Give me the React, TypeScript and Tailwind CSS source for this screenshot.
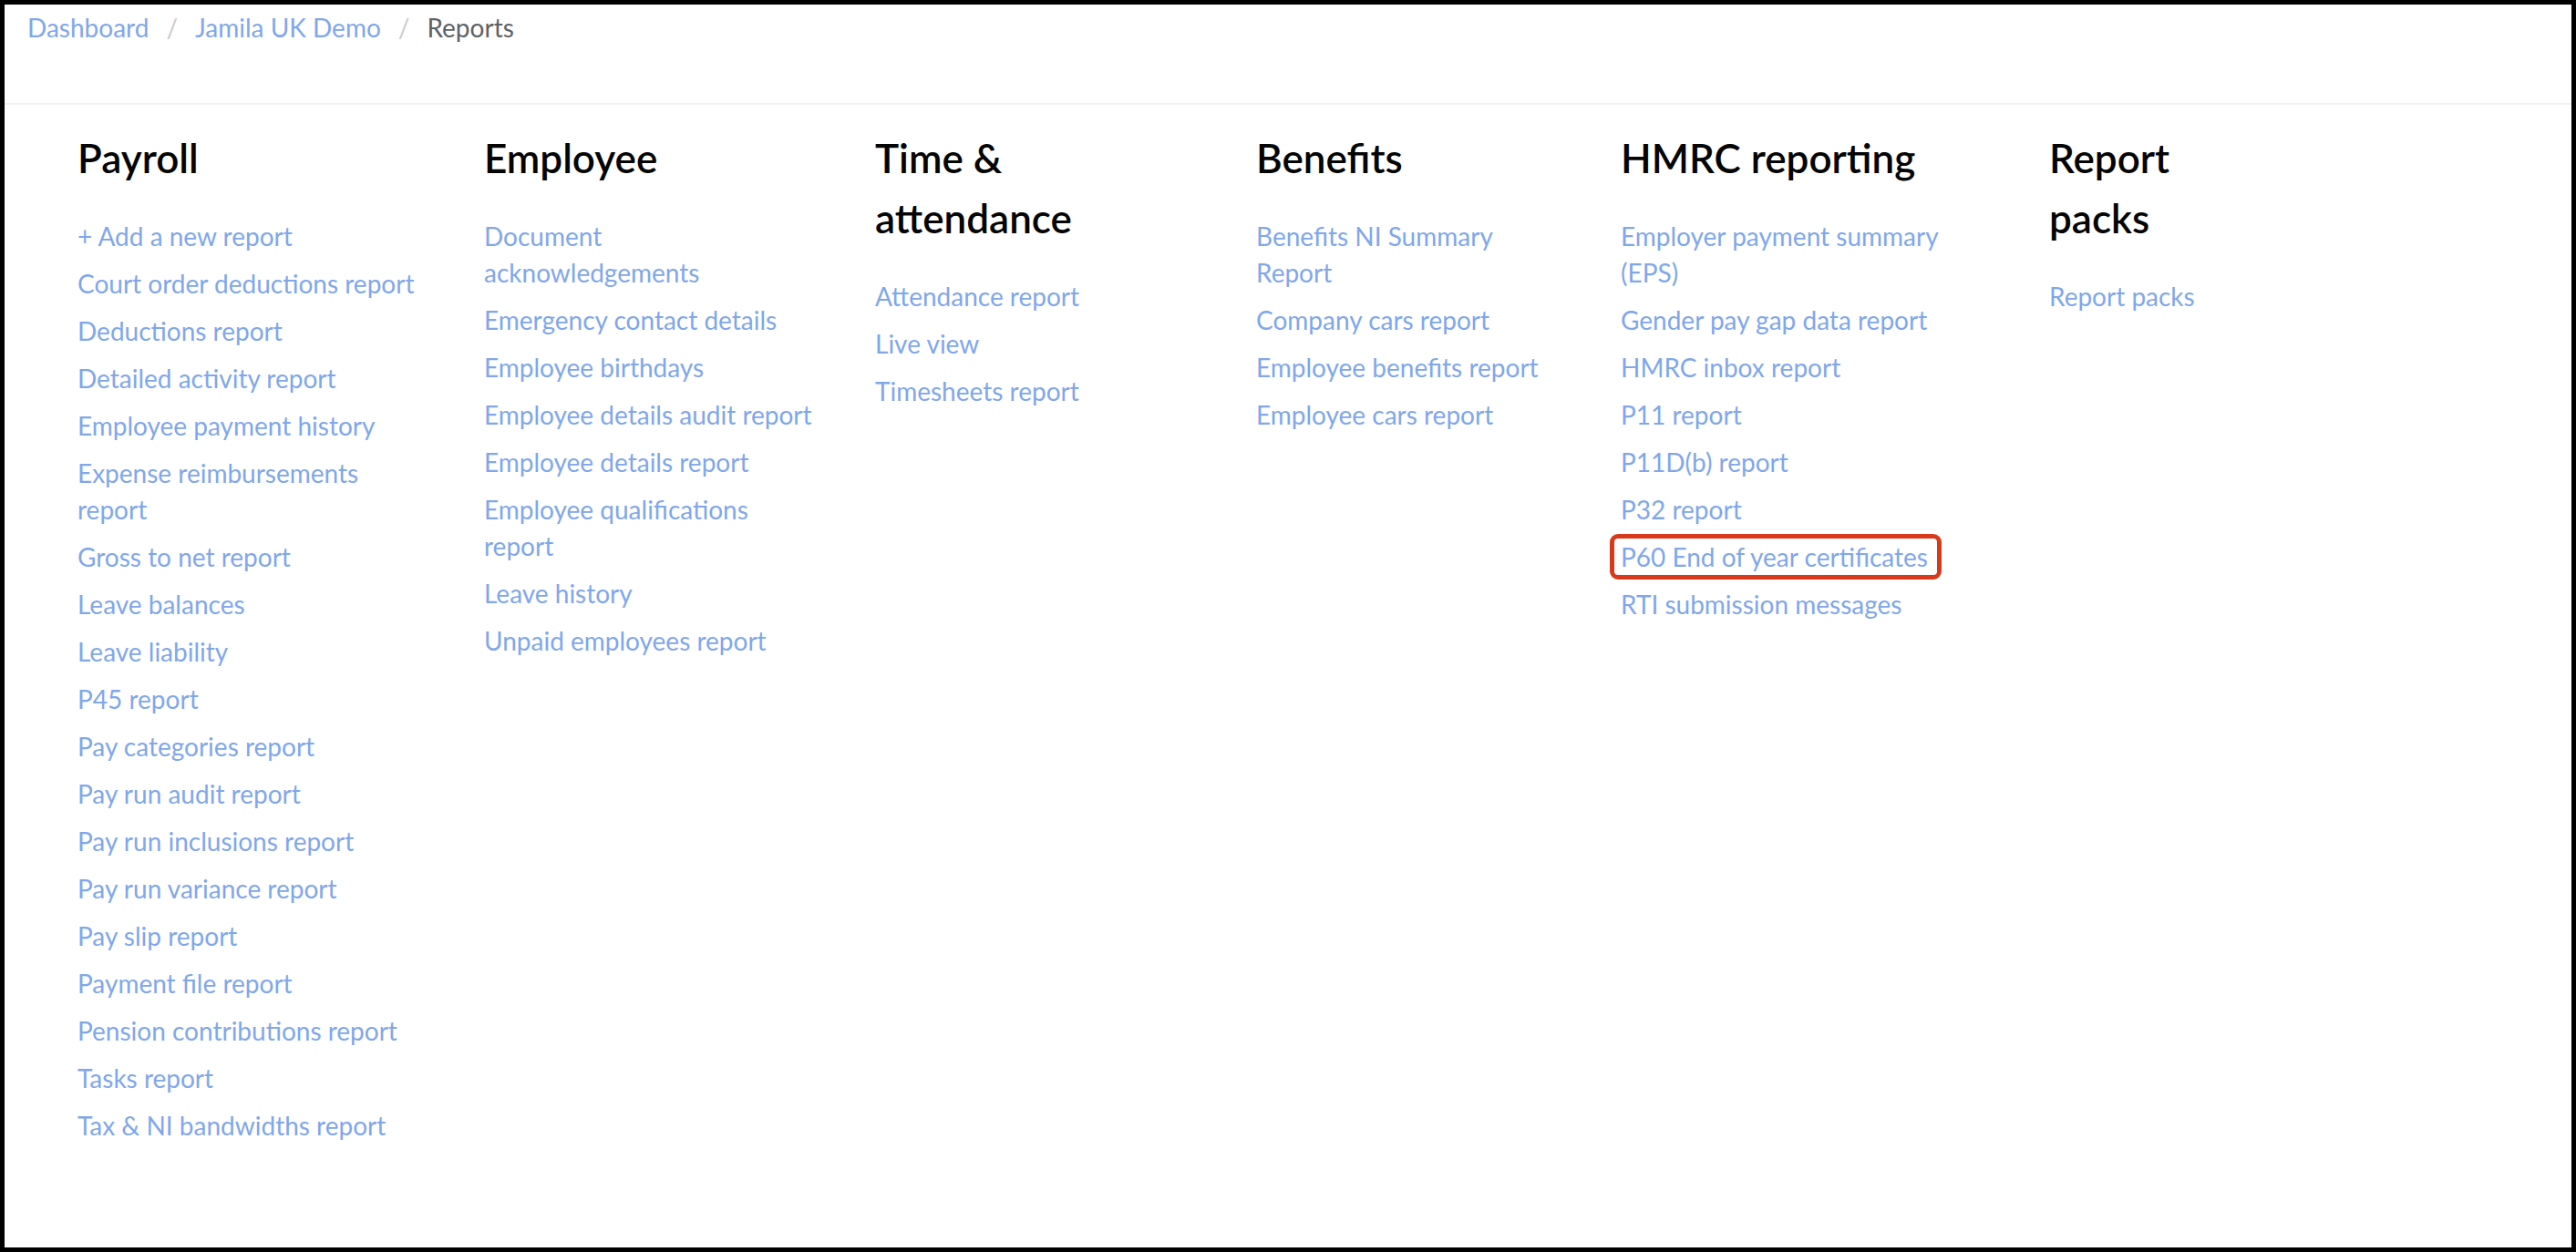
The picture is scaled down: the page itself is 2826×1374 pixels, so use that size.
import type { ReactNode } from "react";

type ReportGroup = {
  title: string;
  // track width of the column and the width its text wraps at
  track: string;
  wrap: string;
  items: string[];
};

const groups: ReportGroup[] = [
  {
    title: "Payroll",
    track: "w-[446px]",
    wrap: "max-w-[380px]",
    items: [
      "+ Add a new report",
      "Court order deductions report",
      "Deductions report",
      "Detailed activity report",
      "Employee payment history",
      "Expense reimbursements report",
      "Gross to net report",
      "Leave balances",
      "Leave liability",
      "P45 report",
      "Pay categories report",
      "Pay run audit report",
      "Pay run inclusions report",
      "Pay run variance report",
      "Pay slip report",
      "Payment file report",
      "Pension contributions report",
      "Tasks report",
      "Tax & NI bandwidths report",
    ],
  },
  {
    title: "Employee",
    track: "w-[429px]",
    wrap: "max-w-[362px]",
    items: [
      "Document acknowledgements",
      "Emergency contact details",
      "Employee birthdays",
      "Employee details audit report",
      "Employee details report",
      "Employee qualifications report",
      "Leave history",
      "Unpaid employees report",
    ],
  },
  {
    title: "Time & attendance",
    track: "w-[418px]",
    wrap: "max-w-[290px]",
    items: ["Attendance report", "Live view", "Timesheets report"],
  },
  {
    title: "Benefits",
    track: "w-[400px]",
    wrap: "max-w-[325px]",
    items: [
      "Benefits NI Summary Report",
      "Company cars report",
      "Employee benefits report",
      "Employee cars report",
    ],
  },
  {
    title: "HMRC reporting",
    track: "w-[470px]",
    wrap: "max-w-[385px]",
    items: [
      "Employer payment summary (EPS)",
      "Gender pay gap data report",
      "HMRC inbox report",
      "P11 report",
      "P11D(b) report",
      "P32 report",
      "P60 End of year certificates",
      "RTI submission messages",
    ],
  },
  {
    title: "Report packs",
    track: "w-[200px]",
    wrap: "max-w-[200px]",
    items: ["Report packs"],
  },
];

const HIGHLIGHTED = "P60 End of year certificates";

function Crumb({ children, current }: { children: ReactNode; current?: boolean }) {
  return (
    <span className={current ? "text-[#5c6267]" : "text-[#80a7ea]"}>{children}</span>
  );
}

function Slash() {
  return <span className="mx-[19px] text-[#cbcbcb]">/</span>;
}

function ReportLink({ label }: { label: string }) {
  if (label !== HIGHLIGHTED) {
    return <a className="cursor-pointer text-[#80a7ea]">{label}</a>;
  }
  return (
    <span className="relative inline-block">
      <a className="cursor-pointer text-[#80a7ea]">{label}</a>
      <span
        className="pointer-events-none absolute -top-[5px] -right-[15px] -bottom-[5px] -left-[12px] rounded-[9px] border-[5px] border-[#d8391b]"
        aria-hidden
      />
    </span>
  );
}

export default function App() {
  return (
    <div className="box-border h-[1374px] w-full overflow-hidden border-[5px] border-black bg-white font-['Lato','Open_Sans',sans-serif] antialiased">
      <nav className="box-border flex h-[108px] items-start pl-[25px] pt-[5px] text-[28px] leading-[40px]">
        <Crumb>Dashboard</Crumb>
        <Slash />
        <Crumb>Jamila UK Demo</Crumb>
        <Slash />
        <Crumb current>Reports</Crumb>
      </nav>

      <main className="border-t-2 border-[#f1f1f1] pl-[80px] pt-[25px]">
        <div className="flex items-start">
          {groups.map((group) => (
            <section key={group.title} className={`${group.track} shrink-0`}>
              <div className={group.wrap}>
                <h2 className="text-[44px] font-semibold leading-[66px] text-[#050505]">
                  {group.title}
                </h2>
                <ul className="mt-[33px] space-y-[12px] text-[28px] leading-[40px]">
                  {group.items.map((item) => (
                    <li key={item}>
                      <ReportLink label={item} />
                    </li>
                  ))}
                </ul>
              </div>
            </section>
          ))}
        </div>
      </main>
    </div>
  );
}
